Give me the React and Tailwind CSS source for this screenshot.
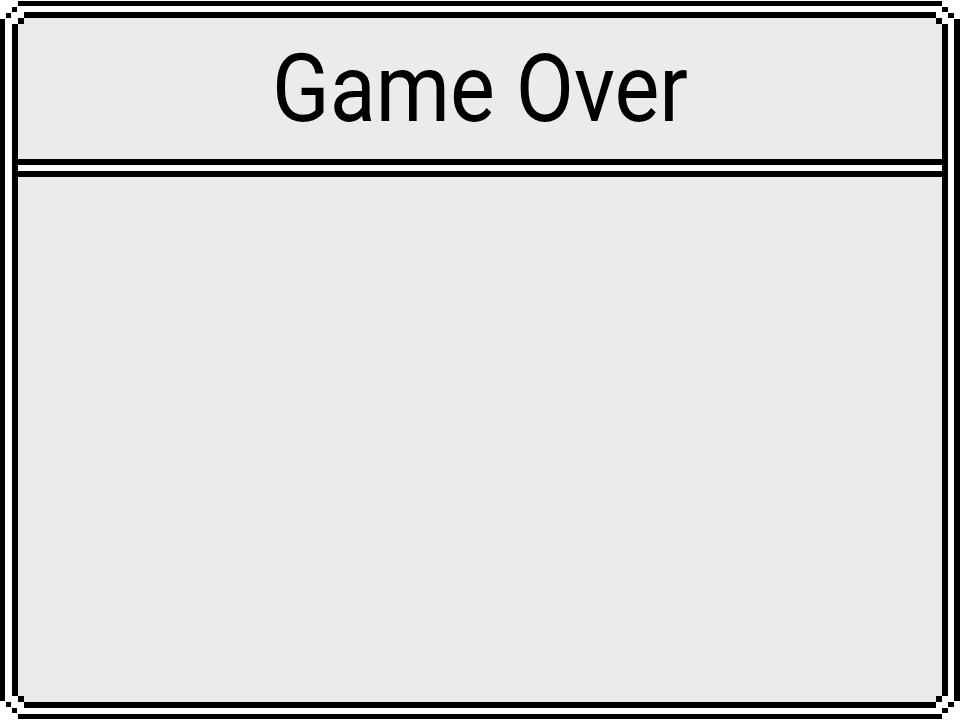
import React from "react";

// stepped "pixel" corners, 6px per step
const outerClip =
  "[clip-path:polygon(18px_0,calc(100%-18px)_0,calc(100%-18px)_6px,calc(100%-12px)_6px,calc(100%-12px)_12px,calc(100%-6px)_12px,calc(100%-6px)_18px,100%_18px,100%_calc(100%-18px),calc(100%-6px)_calc(100%-18px),calc(100%-6px)_calc(100%-12px),calc(100%-12px)_calc(100%-12px),calc(100%-12px)_calc(100%-6px),calc(100%-18px)_calc(100%-6px),calc(100%-18px)_100%,18px_100%,18px_calc(100%-6px),12px_calc(100%-6px),12px_calc(100%-12px),6px_calc(100%-12px),6px_calc(100%-18px),0_calc(100%-18px),0_18px,6px_18px,6px_12px,12px_12px,12px_6px,18px_6px)]";

const boxClip =
  "[clip-path:polygon(12px_0,calc(100%-12px)_0,calc(100%-12px)_6px,calc(100%-6px)_6px,calc(100%-6px)_12px,100%_12px,100%_calc(100%-12px),calc(100%-6px)_calc(100%-12px),calc(100%-6px)_calc(100%-6px),calc(100%-12px)_calc(100%-6px),calc(100%-12px)_100%,12px_100%,12px_calc(100%-6px),6px_calc(100%-6px),6px_calc(100%-12px),0_calc(100%-12px),0_12px,6px_12px,6px_6px,12px_6px)]";

// notch only the top corners / only the bottom corners
const topNotch =
  "[clip-path:polygon(6px_0,calc(100%-6px)_0,calc(100%-6px)_6px,100%_6px,100%_100%,0_100%,0_6px,6px_6px)]";
const bottomNotch =
  "[clip-path:polygon(0_0,100%_0,100%_calc(100%-6px),calc(100%-6px)_calc(100%-6px),calc(100%-6px)_100%,6px_100%,6px_calc(100%-6px),0_calc(100%-6px))]";

const App = () => {
  return (
    <div className="w-[960px] h-[720px] bg-white py-[1px]">
      <div className={`h-[718px] bg-black pt-[5px] pb-[5px] pl-[5px] pr-[6px] ${outerClip}`}>
        <div className={`h-full bg-white pt-[6px] pb-[6px] pl-[7px] pr-[6px] ${boxClip}`}>
          <div className={`h-full bg-black p-[6px] flex flex-col ${boxClip}`}>
            <div className={`h-[141px] shrink-0 bg-[#ebebeb] flex items-center justify-center ${topNotch}`}>
              <h1 className="font-['Roboto',sans-serif] text-[94px] leading-none text-black scale-x-90 mt-[1px]">
                Game Over
              </h1>
            </div>
            <div className="h-[6px] shrink-0 bg-white my-[6px]" />
            <div className={`flex-1 bg-[#ebebeb] ${bottomNotch}`} />
          </div>
        </div>
      </div>
    </div>
  );
};

export default App;
